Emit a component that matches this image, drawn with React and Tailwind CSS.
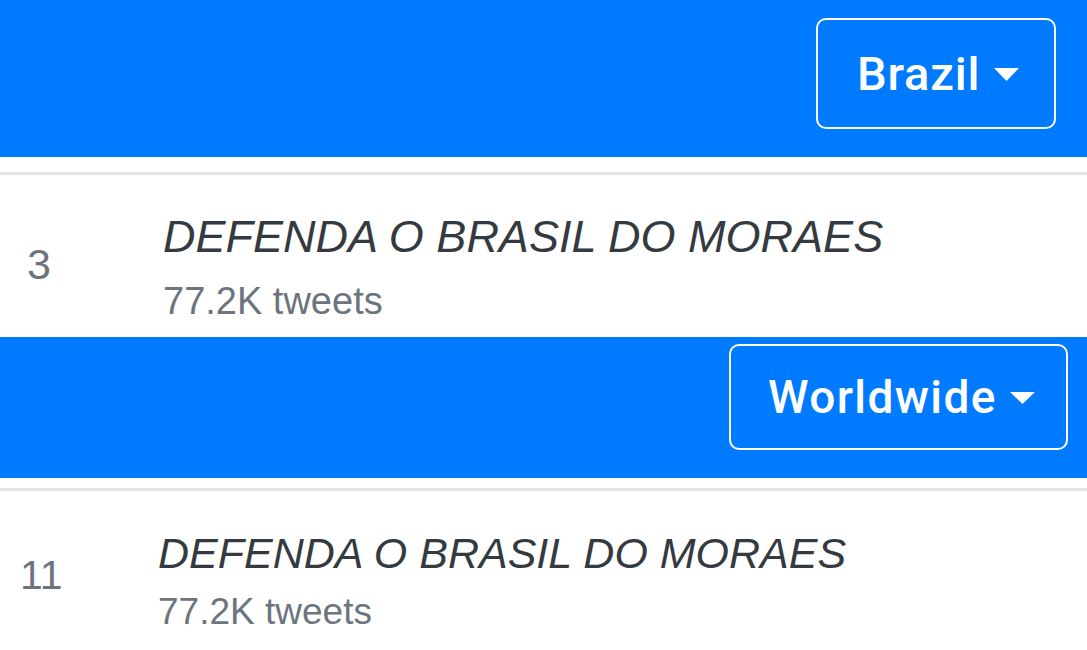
import React from "react";

function Caret({ w, h, className }) {
  return (
    <svg width={w} height={h} viewBox={`0 0 ${w} ${h}`} className={className}>
      <polygon points={`0,0 ${w},0 ${w / 2},${h}`} fill="#ffffff" />
    </svg>
  );
}

export default function App() {
  return (
    <div
      className="w-[1087px] h-[650px] overflow-hidden bg-white"
      style={{ fontFamily: '"Liberation Sans", Arial, sans-serif' }}
    >
      {/* Section 1 header */}
      <div className="bg-[#007bff] h-[157px] flex justify-end items-start pt-[18px] pr-[31px]">
        <div className="h-[111px] w-[240px] border-2 border-white rounded-[10px] flex items-center pl-[39px]">
          <span className="text-white font-medium text-[47px] leading-none tracking-[0.8px] font-['Roboto',sans-serif]">Brazil</span>
          <Caret w={25} h={13} className="ml-[14px] mt-[2px]" />
        </div>
      </div>
      <div className="h-[15px] bg-white" />
      <div className="h-[3px] bg-[#e4e5ea]" />
      <div className="h-[162px] flex pl-[27px]">
        <div className="w-[136px] pt-[68px] text-[43px] leading-none text-[#6c757d]">3</div>
        <div className="flex flex-col pt-[39px]">
          <div className="text-[45px] italic leading-none text-[#343a40] whitespace-nowrap">
            DEFENDA O BRASIL DO MORAES
          </div>
          <div className="mt-[23px] text-[38px] leading-none text-[#6c757d] whitespace-nowrap">
            77.2K tweets
          </div>
        </div>
      </div>

      {/* Section 2 header */}
      <div className="bg-[#007bff] h-[141px] flex justify-end items-start pt-[7px] pr-[19px]">
        <div className="h-[106px] w-[339px] border-2 border-white rounded-[10px] flex items-center pl-[37px]">
          <span className="text-white font-medium text-[46px] leading-none tracking-[1.4px] font-['Roboto',sans-serif]">Worldwide</span>
          <Caret w={25} h={12} className="ml-[13px] mt-[2px]" />
        </div>
      </div>
      <div className="h-[10px] bg-white" />
      <div className="h-[3px] bg-[#e4e5ea]" />
      <div className="h-[159px] flex pl-[20px]">
        <div className="w-[138px] pt-[64px] text-[41px] leading-none text-[#6c757d]">11</div>
        <div className="flex flex-col pt-[41px]">
          <div className="text-[43px] italic leading-none text-[#343a40] whitespace-nowrap">
            DEFENDA O BRASIL DO MORAES
          </div>
          <div className="mt-[18px] text-[37px] leading-none text-[#6c757d] whitespace-nowrap">
            77.2K tweets
          </div>
        </div>
      </div>
    </div>
  );
}
